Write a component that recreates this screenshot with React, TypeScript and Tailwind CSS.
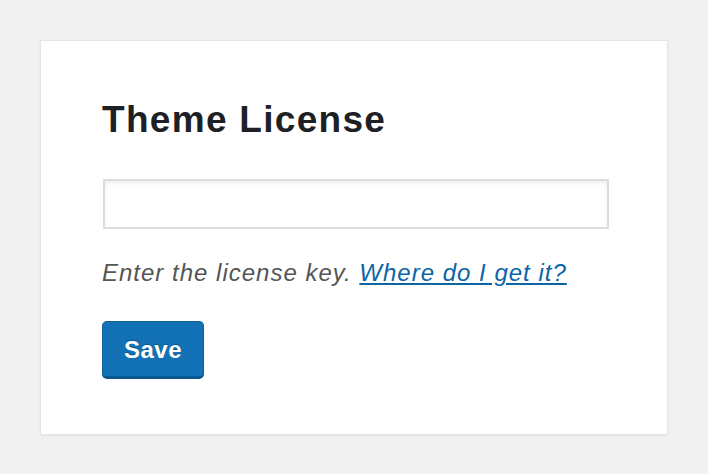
import React from 'react';

const App: React.FC = () => {
  return (
    <div className="min-h-[474px] bg-[#f1f1f1] pt-10 pl-10" style={{ fontFamily: '"Liberation Sans", Arial, sans-serif' }}>
      <div className="w-[628px] h-[395px] bg-white border border-[#e5e5e5] shadow-[0_1px_2px_rgba(0,0,0,0.06)] pl-[61px] pt-[57px]">
        <h1 className="text-[37px] leading-[44px] font-bold tracking-[1.3px] text-[#1d2125]">Theme License</h1>
        <input
          type="text"
          aria-label="License key"
          className="mt-[37px] ml-[1px] block w-[506px] h-[50px] border-2 border-[#dddddd] bg-white shadow-[inset_0_2px_4px_rgba(0,0,0,0.07)] outline-none"
        />
        <p className="mt-[28px] text-[24px] leading-[32px] italic tracking-[1px] text-[#555555]">
          Enter the license key.{' '}
          <a href="#" className="text-[#0d64a6] underline">Where do I get it?</a>
        </p>
        <button
          type="button"
          className="mt-[32px] w-[102px] h-[58px] rounded-[5px] bg-[#1272b5] border border-[#0d5f9a] border-b-[3px] border-b-[#0a5890] pt-[2px] text-white text-[24px] font-bold tracking-[0.5px] [text-shadow:0_-1px_1px_#0a5890]"
        >
          Save
        </button>
      </div>
    </div>
  );
};

export default App;
